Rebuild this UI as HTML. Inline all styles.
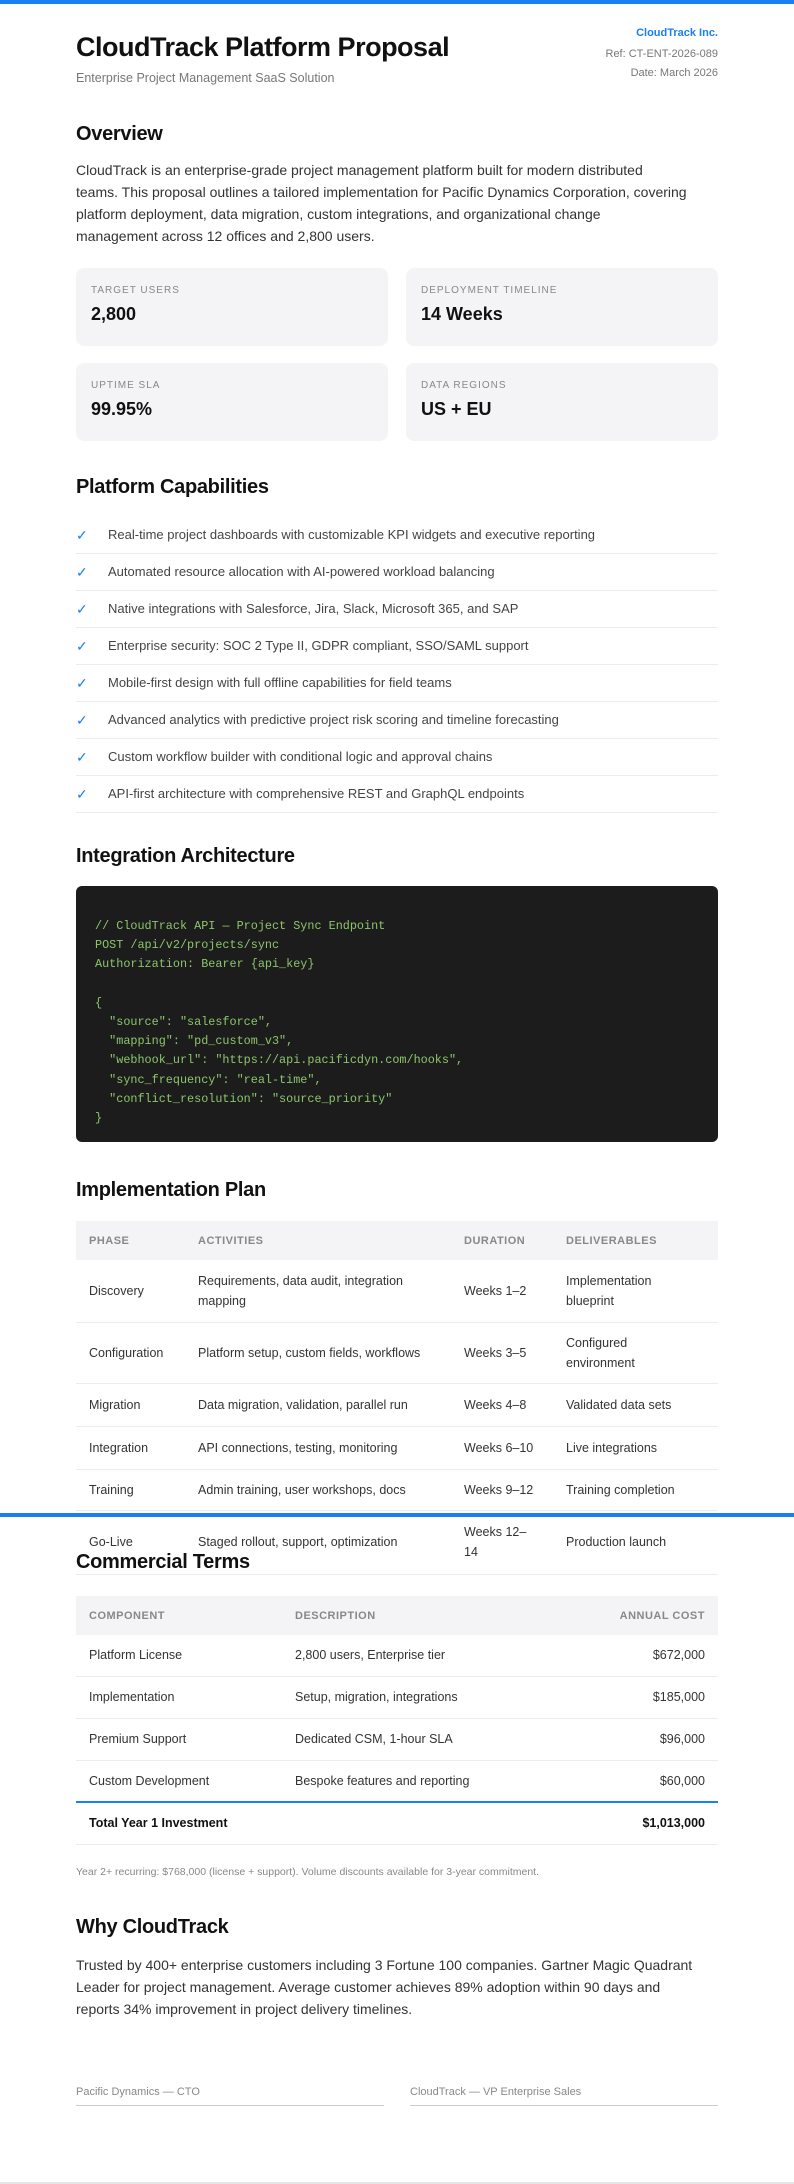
<!DOCTYPE html>
<html><head><meta charset="utf-8">
<style>
*{margin:0;padding:0;box-sizing:border-box}
html,body{width:794px;height:2184px;background:#fff;overflow:hidden}
body{position:relative;font-family:"Liberation Sans",sans-serif;color:#222}
.a{position:absolute}
.bar{left:0;width:794px;height:4px;background:#1a7ff0}
h1{position:absolute;left:76px;top:32px;font-size:27px;font-weight:bold;color:#111;letter-spacing:-0.5px;white-space:nowrap}
.sub{left:76px;top:71px;font-size:12.5px;color:#777}
.meta{right:76px;text-align:right;font-size:11px;color:#777;white-space:nowrap}
h2{position:absolute;left:76px;font-size:20px;font-weight:bold;color:#111;letter-spacing:-0.3px;white-space:nowrap}
.p{left:76px;width:650px;font-size:14px;line-height:22px;color:#333;white-space:nowrap}
.card{width:312px;height:78px;background:#f4f4f6;border-radius:8px}
.card .l{position:absolute;left:15px;top:17px;font-size:10px;letter-spacing:1px;color:#888}
.card .v{position:absolute;left:15px;top:36px;font-size:18px;font-weight:bold;color:#111}
.li{left:76px;width:642px;height:37px;border-bottom:1px solid #ececec;font-size:13px;color:#444;line-height:36px;white-space:nowrap}
.li b{position:absolute;left:0;color:#1a7ff0;font-weight:normal;font-size:14px}
.li span{position:absolute;left:32px}
.code{left:76px;top:886px;width:642px;height:256px;background:#1c1c1c;border-radius:6px;padding:31px 0 0 19px;font-family:"Liberation Mono",monospace;font-size:11.8px;line-height:19.2px;color:#8bc66b;white-space:pre}
table{position:absolute;left:76px;width:642px;border-collapse:collapse;table-layout:fixed;font-size:12.5px;color:#333}
th{background:#f4f4f6;color:#888;font-size:11px;text-transform:uppercase;letter-spacing:.5px;text-align:left;padding:0 13px;height:39px}
td{padding:0 13px;border-bottom:1px solid #ececec;line-height:20px;vertical-align:middle}
.r{text-align:right}
.sig{width:308px;border-bottom:1px solid #ccc;font-size:11px;color:#888;height:20px;top:2086px}
</style></head><body>
<div class="a bar" style="top:0"></div>
<h1>CloudTrack Platform Proposal</h1>
<div class="a sub">Enterprise Project Management SaaS Solution</div>
<div class="a meta" style="top:27px;color:#1a7ff0;font-weight:bold">CloudTrack Inc.</div>
<div class="a meta" style="top:48px">Ref: CT-ENT-2026-089</div>
<div class="a meta" style="top:67px">Date: March 2026</div>

<h2 style="top:123px">Overview</h2>
<div class="a p" style="top:159px">CloudTrack is an enterprise-grade project management platform built for modern distributed<br>teams. This proposal outlines a tailored implementation for Pacific Dynamics Corporation, covering<br>platform deployment, data migration, custom integrations, and organizational change<br>management across 12 offices and 2,800 users.</div>

<div class="a card" style="left:76px;top:268px"><div class="l">TARGET USERS</div><div class="v">2,800</div></div>
<div class="a card" style="left:406px;top:268px"><div class="l">DEPLOYMENT TIMELINE</div><div class="v">14 Weeks</div></div>
<div class="a card" style="left:76px;top:363px"><div class="l">UPTIME SLA</div><div class="v">99.95%</div></div>
<div class="a card" style="left:406px;top:363px"><div class="l">DATA REGIONS</div><div class="v">US + EU</div></div>

<h2 style="top:476px">Platform Capabilities</h2>
<div class="a li" style="top:517px"><b>✓</b><span>Real-time project dashboards with customizable KPI widgets and executive reporting</span></div>
<div class="a li" style="top:554px"><b>✓</b><span>Automated resource allocation with AI-powered workload balancing</span></div>
<div class="a li" style="top:591px"><b>✓</b><span>Native integrations with Salesforce, Jira, Slack, Microsoft 365, and SAP</span></div>
<div class="a li" style="top:628px"><b>✓</b><span>Enterprise security: SOC 2 Type II, GDPR compliant, SSO/SAML support</span></div>
<div class="a li" style="top:665px"><b>✓</b><span>Mobile-first design with full offline capabilities for field teams</span></div>
<div class="a li" style="top:702px"><b>✓</b><span>Advanced analytics with predictive project risk scoring and timeline forecasting</span></div>
<div class="a li" style="top:739px"><b>✓</b><span>Custom workflow builder with conditional logic and approval chains</span></div>
<div class="a li" style="top:776px"><b>✓</b><span>API-first architecture with comprehensive REST and GraphQL endpoints</span></div>

<h2 style="top:845px">Integration Architecture</h2>
<div class="a code">// CloudTrack API — Project Sync Endpoint
POST /api/v2/projects/sync
Authorization: Bearer {api_key}

{
  "source": "salesforce",
  "mapping": "pd_custom_v3",
  "webhook_url": "https://api.pacificdyn.com/hooks",
  "sync_frequency": "real-time",
  "conflict_resolution": "source_priority"
}</div>

<h2 style="top:1179px">Implementation Plan</h2>
<table style="top:1221px">
<colgroup><col style="width:109px"><col style="width:266px"><col style="width:102px"><col style="width:165px"></colgroup>
<tr><th>Phase</th><th>Activities</th><th>Duration</th><th>Deliverables</th></tr>
<tr style="height:62px"><td>Discovery</td><td>Requirements, data audit, integration mapping</td><td>Weeks 1–2</td><td>Implementation<br>blueprint</td></tr>
<tr style="height:61px"><td>Configuration</td><td>Platform setup, custom fields, workflows</td><td>Weeks 3–5</td><td>Configured<br>environment</td></tr>
<tr style="height:43px"><td>Migration</td><td>Data migration, validation, parallel run</td><td>Weeks 4–8</td><td>Validated data sets</td></tr>
<tr style="height:43px"><td>Integration</td><td>API connections, testing, monitoring</td><td>Weeks 6–10</td><td>Live integrations</td></tr>
<tr style="height:41px"><td>Training</td><td>Admin training, user workshops, docs</td><td>Weeks 9–12</td><td>Training completion</td></tr>
<tr style="height:64px"><td>Go-Live</td><td>Staged rollout, support, optimization</td><td>Weeks 12–<br>14</td><td>Production launch</td></tr>
</table>
<div class="a bar" style="top:1513px;height:4px"></div>
<h2 style="top:1551px">Commercial Terms</h2>

<table style="top:1596px">
<colgroup><col style="width:206px"><col style="width:300px"><col style="width:136px"></colgroup>
<tr><th>Component</th><th>Description</th><th class="r">Annual Cost</th></tr>
<tr style="height:41px"><td>Platform License</td><td>2,800 users, Enterprise tier</td><td class="r">$672,000</td></tr>
<tr style="height:42px"><td>Implementation</td><td>Setup, migration, integrations</td><td class="r">$185,000</td></tr>
<tr style="height:42px"><td>Premium Support</td><td>Dedicated CSM, 1-hour SLA</td><td class="r">$96,000</td></tr>
<tr style="height:42px"><td style="border-bottom:2px solid #1a7ff0">Custom Development</td><td style="border-bottom:2px solid #1a7ff0">Bespoke features and reporting</td><td class="r" style="border-bottom:2px solid #1a7ff0">$60,000</td></tr>
<tr style="height:42px"><td colspan="2" style="font-weight:bold;color:#111">Total Year 1 Investment</td><td class="r" style="font-weight:bold;color:#111">$1,013,000</td></tr>
</table>
<div class="a" style="left:76px;top:1866px;font-size:10.5px;color:#888;white-space:nowrap">Year 2+ recurring: $768,000 (license + support). Volume discounts available for 3-year commitment.</div>

<h2 style="top:1916px">Why CloudTrack</h2>
<div class="a p" style="top:1954px">Trusted by 400+ enterprise customers including 3 Fortune 100 companies. Gartner Magic Quadrant<br>Leader for project management. Average customer achieves 89% adoption within 90 days and<br>reports 34% improvement in project delivery timelines.</div>

<div class="a sig" style="left:76px">Pacific Dynamics — CTO</div>
<div class="a sig" style="left:410px">CloudTrack — VP Enterprise Sales</div>
<div class="a" style="left:0;top:2182px;width:794px;height:2px;background:#e6e6e6"></div>
</body></html>
